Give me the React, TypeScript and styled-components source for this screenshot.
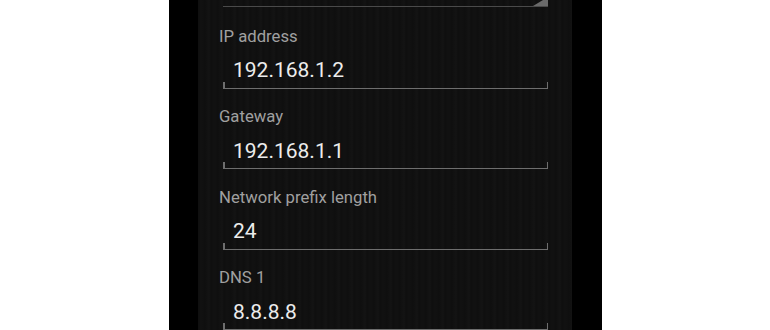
import React from "react";
import styled, { createGlobalStyle } from "styled-components";

const Global = createGlobalStyle`
  html, body { margin: 0; padding: 0; background: #ffffff; }
  body { font-family: Roboto, "Noto Sans", sans-serif; }
`;

const Page = styled.div`
  width: 770px;
  height: 330px;
  overflow: hidden;
  display: flex;
  justify-content: center;
  background: #ffffff;
`;

const Phone = styled.div`
  width: 433px;
  height: 330px;
  background: #000000;
  display: flex;
  justify-content: center;
`;

const Dialog = styled.div`
  width: 374px;
  height: 330px;
  overflow: hidden;
  background-color: #0f0f0f;
  background-image: repeating-linear-gradient(
    90deg,
    rgba(255, 255, 255, 0) 0px,
    rgba(255, 255, 255, 0.012) 3px,
    rgba(255, 255, 255, 0) 7px,
    rgba(255, 255, 255, 0.02) 11px,
    rgba(255, 255, 255, 0) 13px
  );
  display: flex;
  flex-direction: column;
  padding: 0 24px 0 21px;
  box-sizing: border-box;
  & > * { flex-shrink: 0; }
`;

const Spinner = styled.div`
  position: relative;
  height: 6px;
  margin-left: 4px;
  border-bottom: 1.5px solid #4a4a4a;
  &::after {
    content: "";
    position: absolute;
    right: 0;
    bottom: 0;
    width: 0;
    height: 0;
    border-left: 15px solid transparent;
    border-bottom: 9px solid #6a6a6a;
  }
`;

const Field = styled.div<{ $first?: boolean }>`
  display: flex;
  flex-direction: column;
  padding-top: ${(p) => (p.$first ? "19.5px" : "18.5px")};
`;

const Label = styled.div`
  font-size: 16.7px;
  line-height: 20px;
  color: #a0a0a0;
`;

const Input = styled.div`
  position: relative;
  margin: 10.5px 0 0 4px;
  padding: 0 0 4.5px 10px;
  font-size: 21px;
  line-height: 26px;
  color: #ececec;
  border-bottom: 1.5px solid #6e6e6e;
  &::before,
  &::after {
    content: "";
    position: absolute;
    bottom: 0;
    width: 1.5px;
    height: 6px;
    background: #6e6e6e;
  }
  &::before { left: 0; }
  &::after { right: 0; }
`;

const fields = [
  { label: "IP address", value: "192.168.1.2" },
  { label: "Gateway", value: "192.168.1.1" },
  { label: "Network prefix length", value: "24" },
  { label: "DNS 1", value: "8.8.8.8" },
];

export default function App() {
  return (
    <>
      <Global />
      <Page>
        <Phone>
          <Dialog>
            <Spinner />
            {fields.map((f, i) => (
              <Field key={f.label} $first={i === 0}>
                <Label>{f.label}</Label>
                <Input>{f.value}</Input>
              </Field>
            ))}
          </Dialog>
        </Phone>
      </Page>
    </>
  );
}
